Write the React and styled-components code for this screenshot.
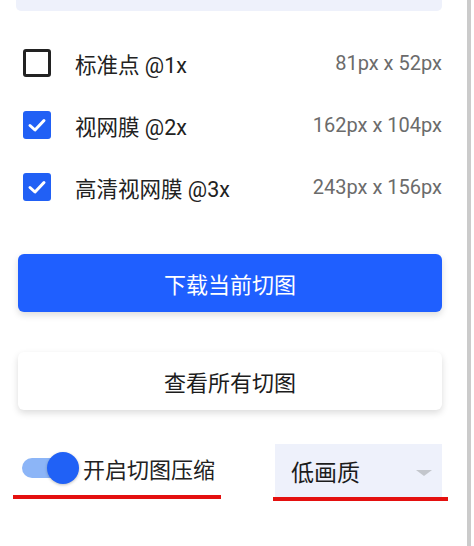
import React from 'react';
import styled, { createGlobalStyle } from 'styled-components';

const GlobalStyle = createGlobalStyle`
  html, body {
    margin: 0;
    padding: 0;
    background: #fff;
  }
  body {
    font-family: Roboto, "Noto Sans CJK SC", sans-serif;
  }
`;

const Page = styled.div`
  display: flex;
  width: 474px;
  height: 546px;
  overflow: hidden;
`;

const Panel = styled.div`
  width: 424px;
  padding: 0 25px 0 18px;
  display: flex;
  flex-direction: column;
`;

const ScrollBar = styled.div`
  width: 4px;
  background: #cbcbcb;
`;

const TopStrip = styled.div`
  height: 11px;
  margin-left: -2px;
  background: #eef1fb;
  border-radius: 0 0 5px 5px;
`;

const OptionList = styled.div`
  display: flex;
  flex-direction: column;
  margin-top: 38px;
  gap: 34px;
`;

const OptionRow = styled.label`
  display: flex;
  align-items: center;
  height: 28px;
  padding-left: 5px;
`;

const Box = styled.span`
  box-sizing: border-box;
  width: 28px;
  height: 28px;
  border-radius: 3px;
  display: flex;
  align-items: center;
  justify-content: center;
  background: ${(p) => (p.checked ? '#2160f5' : '#fff')};
  border: ${(p) => (p.checked ? 'none' : '3px solid #222')};
`;

const OptionName = styled.span`
  margin-left: 24px;
  font-size: 21.5px;
  color: #222;
  flex: 1;
`;

const OptionSize = styled.span`
  font-size: 20px;
  color: #6b6b6b;
`;

const Button = styled.button`
  box-sizing: border-box;
  width: 424px;
  height: 58px;
  border: none;
  border-radius: 6px;
  font-family: inherit;
  font-size: 22px;
  cursor: pointer;
  background: ${(p) => (p.primary ? '#1f5fff' : '#fff')};
  color: ${(p) => (p.primary ? '#fff' : '#1c1c1c')};
  box-shadow: 0 3px 7px rgba(0, 0, 0, 0.14);
  margin-top: ${(p) => p.top}px;
`;

const Footer = styled.div`
  display: flex;
  justify-content: space-between;
  margin-top: 34px;
`;

const Underlined = styled.div`
  display: flex;
  flex-direction: column;
  margin-left: ${(p) => p.shift}px;
`;

const RedLine = styled.div`
  height: 4px;
  background: #e4100f;
  margin-top: ${(p) => p.gap}px;
`;

const SwitchRow = styled.div`
  display: flex;
  align-items: center;
  height: 34px;
  margin-top: 7px;
  padding: 0 6px 0 9px;
`;

const Track = styled.span`
  position: relative;
  width: 54px;
  height: 20px;
  border-radius: 10px;
  background: #8cb5f7;
`;

const Knob = styled.span`
  position: absolute;
  right: -3px;
  top: -6px;
  width: 32px;
  height: 32px;
  border-radius: 50%;
  background: #2061f6;
  box-shadow: 0 1px 3px rgba(0, 0, 0, 0.25);
`;

const SwitchLabel = styled.span`
  margin-left: 7px;
  font-size: 22px;
  color: #222;
`;

const Select = styled.div`
  box-sizing: border-box;
  width: 167px;
  height: 53px;
  margin-left: 2px;
  background: #eef1fb;
  display: flex;
  align-items: center;
  justify-content: space-between;
  padding: 0 10px 0 16px;
  font-size: 23px;
  color: #1c1c1c;
`;

const Caret = styled.span`
  width: 0;
  height: 0;
  border-left: 8px solid transparent;
  border-right: 8px solid transparent;
  border-top: 6px solid #c3c6cc;
  margin-top: 4px;
`;

const Check = () => (
  <svg width="20" height="16" viewBox="0 0 20 16">
    <path d="M3 8.5 L8 13 L17 3.5" fill="none" stroke="#fff" strokeWidth="3" strokeLinecap="round" strokeLinejoin="round" />
  </svg>
);

const options = [
  { name: '标准点 @1x', size: '81px x 52px', checked: false },
  { name: '视网膜 @2x', size: '162px x 104px', checked: true },
  { name: '高清视网膜 @3x', size: '243px x 156px', checked: true },
];

export default function App() {
  return (
    <Page>
      <GlobalStyle />
      <Panel>
        <TopStrip />
        <OptionList>
          {options.map((o) => (
            <OptionRow key={o.name}>
              <Box checked={o.checked}>{o.checked && <Check />}</Box>
              <OptionName>{o.name}</OptionName>
              <OptionSize>{o.size}</OptionSize>
            </OptionRow>
          ))}
        </OptionList>
        <Button primary top={53}>下载当前切图</Button>
        <Button top={40}>查看所有切图</Button>
        <Footer>
          <Underlined shift={-5}>
            <SwitchRow>
              <Track>
                <Knob />
              </Track>
              <SwitchLabel>开启切图压缩</SwitchLabel>
            </SwitchRow>
            <RedLine gap={10} />
          </Underlined>
          <Underlined shift={0}>
            <Select>
              低画质
              <Caret />
            </Select>
            <RedLine gap={0} style={{ marginRight: -6 }} />
          </Underlined>
        </Footer>
      </Panel>
      <ScrollBar />
    </Page>
  );
}
